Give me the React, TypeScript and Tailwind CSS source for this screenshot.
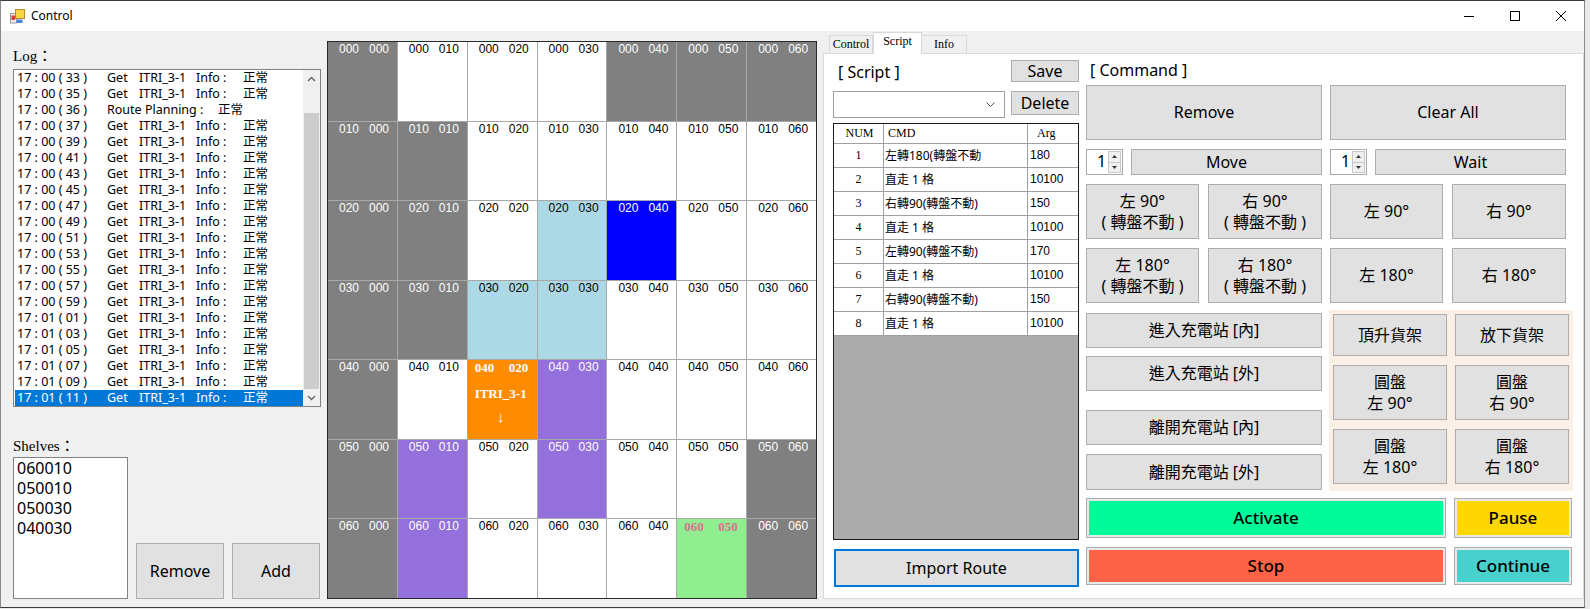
import React from 'react';

const sans = "font-['Noto_Sans','Noto_Sans_CJK_TC',sans-serif]";
const serif = "font-['Liberation_Serif','Noto_Sans_CJK_TC',serif]";
const arial = "font-['Liberation_Sans',sans-serif]";

function Btn({ className = '', children }: { className?: string; children?: React.ReactNode }) {
  return (
    <div
      className={`border border-[#adadad] bg-[#e1e1e1] flex flex-col items-center justify-center text-center text-[16px] leading-[21px] text-black ${sans} ${className}`}
    >
      {children}
    </div>
  );
}

function ColorBtn({ className = '', color, children }: { className?: string; color: string; children?: React.ReactNode }) {
  return (
    <div className={`border border-[#adadad] bg-[#e9e9e9] p-[2px] ${className}`}>
      <div className={`w-full h-full flex items-center justify-center text-[17px] font-medium text-black ${sans} ${color}`}>
        {children}
      </div>
    </div>
  );
}

function AppIcon() {
  return (
    <svg width="15" height="15" viewBox="0 0 15 15">
      <rect x="0.5" y="4.5" width="6" height="9.5" fill="#ececec" stroke="#9a9a9a" />
      <rect x="1.5" y="6.5" width="3.5" height="4.5" fill="#d83b3b" />
      <rect x="5.5" y="0.5" width="9" height="9" fill="#f8d444" stroke="#b98d22" />
      <rect x="6.5" y="10.5" width="6" height="3.5" fill="#4f86dc" />
    </svg>
  );
}

function TitleBar() {
  return (
    <div className="h-[30px] bg-white flex items-center">
      <div className="ml-[9px]">
        <AppIcon />
      </div>
      <div className={`ml-[6px] text-[12px] text-black ${sans}`}>Control</div>
      <div className="flex-1" />
      <div className="w-[46px] h-[30px] flex items-center justify-center">
        <svg width="10" height="10" viewBox="0 0 10 10">
          <line x1="0" y1="5.5" x2="10" y2="5.5" stroke="#000" strokeWidth="1" />
        </svg>
      </div>
      <div className="w-[46px] h-[30px] flex items-center justify-center">
        <svg width="10" height="10" viewBox="0 0 10 10">
          <rect x="0.5" y="0.5" width="9" height="9" fill="none" stroke="#000" strokeWidth="1" />
        </svg>
      </div>
      <div className="w-[46px] h-[30px] flex items-center justify-center">
        <svg width="10" height="10" viewBox="0 0 10 10">
          <line x1="0" y1="0" x2="10" y2="10" stroke="#000" strokeWidth="1" />
          <line x1="10" y1="0" x2="0" y2="10" stroke="#000" strokeWidth="1" />
        </svg>
      </div>
    </div>
  );
}

type LogItem = { t: string; route?: boolean };
const logItems: LogItem[] = [
  { t: '17 : 00 ( 33 )' },
  { t: '17 : 00 ( 35 )' },
  { t: '17 : 00 ( 36 )', route: true },
  { t: '17 : 00 ( 37 )' },
  { t: '17 : 00 ( 39 )' },
  { t: '17 : 00 ( 41 )' },
  { t: '17 : 00 ( 43 )' },
  { t: '17 : 00 ( 45 )' },
  { t: '17 : 00 ( 47 )' },
  { t: '17 : 00 ( 49 )' },
  { t: '17 : 00 ( 51 )' },
  { t: '17 : 00 ( 53 )' },
  { t: '17 : 00 ( 55 )' },
  { t: '17 : 00 ( 57 )' },
  { t: '17 : 00 ( 59 )' },
  { t: '17 : 01 ( 01 )' },
  { t: '17 : 01 ( 03 )' },
  { t: '17 : 01 ( 05 )' },
  { t: '17 : 01 ( 07 )' },
  { t: '17 : 01 ( 09 )' },
  { t: '17 : 01 ( 11 )' },
];

function LogList() {
  return (
    <div className="w-[308px] h-[338px] border border-[#828282] bg-white flex">
      <div className={`w-[289px] text-[12.5px] text-black ${sans}`}>
        {logItems.map((it, i) => {
          const sel = i === logItems.length - 1;
          return (
            <div
              key={i}
              className={`ml-[1px] pl-[2px] h-[16px] leading-[16px] flex whitespace-pre ${sel ? 'bg-[#0078d7] text-white' : ''}`}
            >
              <span className="w-[90px]">{it.t}</span>
              {it.route ? (
                <>
                  <span className="w-[111px]">Route Planning :</span>
                  <span>正常</span>
                </>
              ) : (
                <>
                  <span className="w-[32px]">Get</span>
                  <span className="w-[57px]">ITRI_3-1</span>
                  <span className="w-[47px]">Info :</span>
                  <span>正常</span>
                </>
              )}
            </div>
          );
        })}
      </div>
      <div className="w-[17px] bg-[#f0f0f0] flex flex-col">
        <div className="h-[17px] flex items-center justify-center">
          <svg width="9" height="6" viewBox="0 0 9 6">
            <polyline points="1,5 4.5,1.5 8,5" fill="none" stroke="#606060" strokeWidth="1.3" />
          </svg>
        </div>
        <div className="flex-1 flex flex-col justify-end px-[1px]">
          <div className="h-[276px] bg-[#cdcdcd]" />
        </div>
        <div className="h-[17px] flex items-center justify-center">
          <svg width="9" height="6" viewBox="0 0 9 6">
            <polyline points="1,1 4.5,4.5 8,1" fill="none" stroke="#606060" strokeWidth="1.3" />
          </svg>
        </div>
      </div>
    </div>
  );
}

const gridColors = [
  ['g', 'w', 'w', 'w', 'g', 'g', 'g'],
  ['g', 'g', 'w', 'w', 'w', 'w', 'w'],
  ['g', 'g', 'w', 'lb', 'b', 'w', 'w'],
  ['g', 'g', 'lb', 'lb', 'w', 'w', 'w'],
  ['g', 'w', 'o', 'p', 'w', 'w', 'w'],
  ['g', 'p', 'w', 'p', 'w', 'w', 'g'],
  ['g', 'p', 'w', 'w', 'w', 'lg', 'g'],
];

const colorClass: Record<string, string> = {
  g: 'bg-[#808080] text-white',
  w: 'bg-white text-black',
  lb: 'bg-[#add8e6] text-black',
  b: 'bg-[#0000ff] text-white',
  o: 'bg-[#ff8c00] text-white',
  p: 'bg-[#9370db] text-white',
  lg: 'bg-[#90ee90] text-[#db7093]',
};

function pad(n: number) {
  return String(n).padStart(3, '0');
}

function MapGrid() {
  return (
    <div className="w-[490px] h-[558px] border border-[#2a2a2a] bg-[#a8a8a8] grid grid-cols-7 grid-rows-7 gap-px">
      {gridColors.map((row, r) =>
        row.map((c, ci) => {
          const a = pad(r * 10);
          const b = pad(ci * 10);
          const bold = c === 'o' || c === 'lg';
          return (
            <div key={`${r}-${ci}`} className={`${colorClass[c]} flex flex-col`}>
              {bold ? (
                <div className={`flex text-[13px] font-bold leading-[14px] pt-[1px] ${serif}`}>
                  <span className="pl-[7px] w-[41px]">{a}</span>
                  <span>{b}</span>
                </div>
              ) : (
                <div className={`flex text-[12px] leading-[14px] ${arial}`}>
                  <span className="pl-[11px] w-[41px]">{a}</span>
                  <span>{b}</span>
                </div>
              )}
              {c === 'o' && (
                <>
                  <div className={`text-center text-[13px] font-bold leading-[14px] mt-[12px] pr-[3px] ${serif}`}>ITRI_3-1</div>
                  <div className={`text-center text-[15px] font-bold leading-[14px] mt-[9px] pr-[3px] ${serif}`}>↓</div>
                </>
              )}
            </div>
          );
        })
      )}
    </div>
  );
}

const scriptRows = [
  ['1', '左轉180(轉盤不動', '180'],
  ['2', '直走 1 格', '10100'],
  ['3', '右轉90(轉盤不動)', '150'],
  ['4', '直走 1 格', '10100'],
  ['5', '左轉90(轉盤不動)', '170'],
  ['6', '直走 1 格', '10100'],
  ['7', '右轉90(轉盤不動)', '150'],
  ['8', '直走 1 格', '10100'],
];

function DataGrid() {
  return (
    <div className="w-[246px] h-[417px] border border-[#1a1a1a] bg-[#ababab] flex flex-col">
      <div className={`flex h-[20px] bg-white border-b border-[#a0a0a0] text-[12px] leading-[19px] text-black ${serif}`}>
        <div className="w-[49px] text-center pl-[2px]">NUM</div>
        <div className="w-[144px] border-l border-[#a0a0a0] pl-[4px]">CMD</div>
        <div className="flex-1 border-l border-[#a0a0a0] pl-[9px]">Arg</div>
      </div>
      {scriptRows.map((r) => (
        <div key={r[0]} className="flex h-[24px] bg-white border-b border-[#a0a0a0] text-black leading-[23px]">
          <div className={`w-[49px] text-center text-[12px] ${serif}`}>{r[0]}</div>
          <div className={`w-[144px] border-l border-[#a0a0a0] pl-[1px] text-[12px] ${sans}`}>{r[1]}</div>
          <div className={`flex-1 border-l border-[#a0a0a0] pl-[2px] text-[12px] ${arial}`}>{r[2]}</div>
        </div>
      ))}
    </div>
  );
}

function NumUpDown() {
  return (
    <div className="w-[37px] h-[26px] border border-[#a8a8a8] bg-white flex">
      <div className={`flex-1 text-[16px] leading-[23px] pl-[10px] text-black ${sans}`}>1</div>
      <div className="w-[13px] my-[1px] mr-[1px] flex flex-col border border-[#c8c8c8] bg-[#f0f0f0]">
        <div className="flex-1 border-b border-[#c8c8c8] flex items-center justify-center">
          <svg width="5" height="3" viewBox="0 0 5 3">
            <polygon points="0,3 2.5,0 5,3" fill="#333" />
          </svg>
        </div>
        <div className="flex-1 flex items-center justify-center">
          <svg width="5" height="3" viewBox="0 0 5 3">
            <polygon points="0,0 2.5,3 5,0" fill="#333" />
          </svg>
        </div>
      </div>
    </div>
  );
}

function TabControl() {
  return (
    <div className="w-[761px] mt-[1px] flex flex-col">
      <div className={`h-[21px] flex items-end pl-[6px] text-[12px] text-black ${serif}`}>
        <div className="w-[44px] h-[18px] border border-b-0 border-[#d9d9d9] bg-[#f0f0f0] text-center leading-[17px]">Control</div>
        <div className="w-[49px] h-[22px] border border-b-0 border-[#d9d9d9] bg-white text-center leading-[17px] relative z-10 mb-[-1px]">Script</div>
        <div className="w-[45px] h-[18px] border border-b-0 border-l-0 border-[#d9d9d9] bg-[#f0f0f0] text-center leading-[17px]">Info</div>
      </div>
      <div className="h-[546px] border border-[#d9d9d9] bg-white flex">
        {/* Script column */}
        <div className="ml-[9px] w-[246px] flex flex-col">
          <div className="mt-[6px] flex items-start">
            <div className={`w-[178px] pl-[5px] pt-[1px] text-[16px] leading-[22px] text-black ${sans}`}>[ Script ]</div>
            <Btn className="w-[68px] h-[22px]">Save</Btn>
          </div>
          <div className="mt-[8px] flex items-start">
            <div className="w-[172px] h-[27px] border border-[#a0a0a0] bg-white flex items-center justify-end pr-[9px]">
              <svg width="9" height="5" viewBox="0 0 9 5">
                <polyline points="0.5,0.5 4.5,4.5 8.5,0.5" fill="none" stroke="#555" strokeWidth="1" />
              </svg>
            </div>
            <Btn className="ml-[6px] w-[68px] h-[24px]">Delete</Btn>
          </div>
          <div className="mt-[5px]">
            <DataGrid />
          </div>
          <div className={`mt-[9px] ml-[1px] w-[245px] h-[38px] border-2 border-[#0078d7] bg-[#e1e1e1] flex items-center justify-center text-[16px] text-black ${sans}`}>
            Import Route
          </div>
        </div>
        {/* Command column */}
        <div className="ml-[7px] w-[487px] flex flex-col">
          <div className={`mt-[4px] h-[24px] pl-[4px] text-[16px] leading-[24px] text-black ${sans}`}>[ Command ]</div>
          <div className="mt-[3px] flex gap-[8px]">
            <Btn className="w-[236px] h-[55px]">Remove</Btn>
            <Btn className="w-[236px] h-[55px]">Clear All</Btn>
          </div>
          <div className="mt-[9px] flex">
            <NumUpDown />
            <Btn className="ml-[8px] w-[191px] h-[26px]">Move</Btn>
            <div className="ml-[8px]">
              <NumUpDown />
            </div>
            <Btn className="ml-[8px] w-[191px] h-[26px]">Wait</Btn>
          </div>
          <div className="mt-[9px] flex">
            <Btn className="w-[113px] h-[55px]">
              <span>左 90°</span>
              <span className="whitespace-pre">( 轉盤不動 )</span>
            </Btn>
            <Btn className="ml-[9px] w-[114px] h-[55px]">
              <span>右 90°</span>
              <span className="whitespace-pre">( 轉盤不動 )</span>
            </Btn>
            <Btn className="ml-[8px] w-[113px] h-[55px]">左 90°</Btn>
            <Btn className="ml-[9px] w-[114px] h-[55px]">右 90°</Btn>
          </div>
          <div className="mt-[9px] flex">
            <Btn className="w-[113px] h-[55px]">
              <span>左 180°</span>
              <span className="whitespace-pre">( 轉盤不動 )</span>
            </Btn>
            <Btn className="ml-[9px] w-[114px] h-[55px]">
              <span>右 180°</span>
              <span className="whitespace-pre">( 轉盤不動 )</span>
            </Btn>
            <Btn className="ml-[8px] w-[113px] h-[55px]">左 180°</Btn>
            <Btn className="ml-[9px] w-[114px] h-[55px]">右 180°</Btn>
          </div>
          <div className="mt-[7px] flex items-start">
            <div className="w-[236px] flex flex-col pt-[3px]">
              <Btn className="h-[35px]">進入充電站 [內]</Btn>
              <Btn className="mt-[8px] h-[35px]">進入充電站 [外]</Btn>
              <Btn className="mt-[19px] h-[35px]">離開充電站 [內]</Btn>
              <Btn className="mt-[9px] h-[36px]">離開充電站 [外]</Btn>
            </div>
            <div className="ml-[7px] w-[244px] h-[181px] bg-[#faf0e6] pt-[4px] pl-[4px] grid grid-cols-[114px_114px] grid-rows-[42px_55px_55px] gap-x-[8px] gap-y-[9px]">
              <Btn>頂升貨架</Btn>
              <Btn>放下貨架</Btn>
              <Btn>
                <span>圓盤</span>
                <span>左 90°</span>
              </Btn>
              <Btn>
                <span>圓盤</span>
                <span>右 90°</span>
              </Btn>
              <Btn>
                <span>圓盤</span>
                <span>左 180°</span>
              </Btn>
              <Btn>
                <span>圓盤</span>
                <span>右 180°</span>
              </Btn>
            </div>
          </div>
          <div className="mt-[7px] flex">
            <ColorBtn className="w-[360px] h-[40px]" color="bg-[#00fa9a]">Activate</ColorBtn>
            <ColorBtn className="ml-[8px] w-[118px] h-[40px]" color="bg-[#ffd700]">Pause</ColorBtn>
          </div>
          <div className="mt-[9px] flex">
            <ColorBtn className="w-[360px] h-[38px]" color="bg-[#ff6347]">Stop</ColorBtn>
            <ColorBtn className="ml-[8px] w-[118px] h-[38px]" color="bg-[#48d1cc]">Continue</ColorBtn>
          </div>
        </div>
      </div>
    </div>
  );
}

export default function App() {
  return (
    <div className="w-[1590px] h-[609px] bg-[#e9e9e9] flex overflow-hidden">
      <div className="w-[1585px] h-[608px] border border-[#8a8a8a] border-t-[#3a3a3a] border-b-[#3a3a3a] bg-[#f0f0f0] flex flex-col">
        <TitleBar />
        <div className="flex-1 flex items-start">
          {/* Left column */}
          <div className="ml-[12px] w-[308px] flex flex-col">
            <div className={`mt-[15px] h-[20px] leading-[20px] text-[15px] text-black ${serif}`}>Log：</div>
            <div className="mt-[3px]">
              <LogList />
            </div>
            <div className="mt-[29px] flex items-end">
              <div className="flex flex-col w-[115px]">
                <div className={`h-[20px] leading-[20px] text-[15px] text-black ${serif}`}>Shelves：</div>
                <div className={`mt-[1px] h-[142px] border border-[#828282] bg-white pl-[3px] text-[16px] leading-[20px] text-black ${sans}`}>
                  <div>060010</div>
                  <div>050010</div>
                  <div>050030</div>
                  <div>040030</div>
                </div>
              </div>
              <Btn className="ml-[8px] w-[88px] h-[56px]">Remove</Btn>
              <Btn className="ml-[8px] w-[88px] h-[56px]">Add</Btn>
            </div>
          </div>
          {/* Grid */}
          <div className="ml-[6px] mt-[10px]">
            <MapGrid />
          </div>
          {/* Tabs */}
          <div className="ml-[6px]">
            <TabControl />
          </div>
        </div>
      </div>
    </div>
  );
}
